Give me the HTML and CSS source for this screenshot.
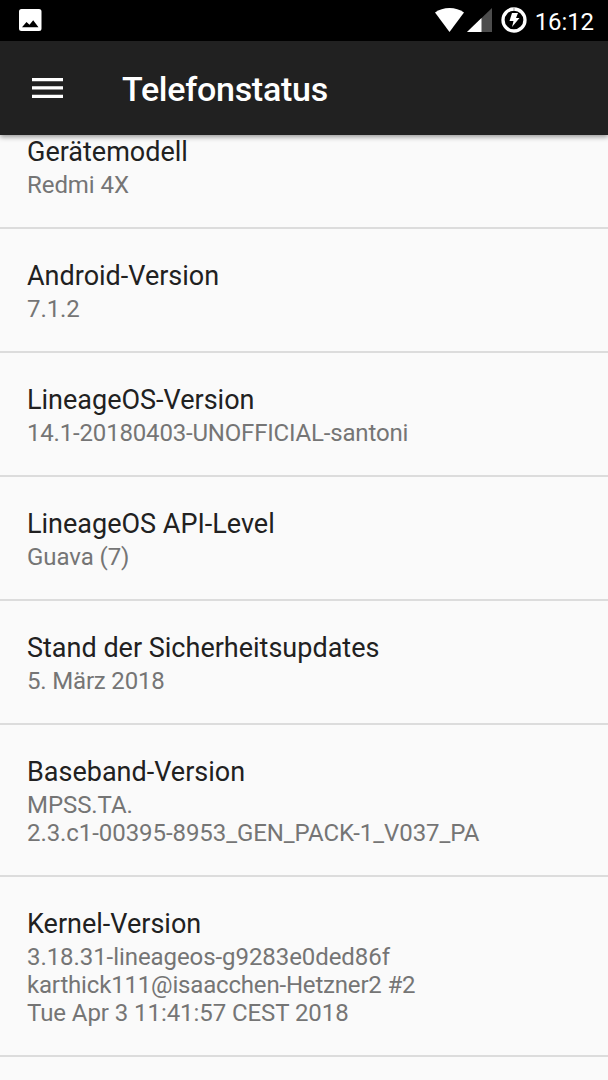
FILE: index.html
```html
<!DOCTYPE html>
<html lang="de">
	<head>
	<meta charset="utf-8" />
	<meta name="viewport" content="width=device-width, initial-scale=1"/>
	<title>Telefonstatus</title>
	<link rel="stylesheet" href="styles.css">
	</head>

	<body>
	<div class="statusbar">
		<svg class="picture" width="23" height="22" viewBox="0 0 23 22">
			<path fill="#fff" fill-rule="evenodd" d="M2.500 0h17.500a2.500 2.500 0 0 1 2.500 2.500v17a2.500 2.500 0 0 1-2.500 2.500H2.500A2.500 2.500 0 0 1 0 19.500v-17A2.500 2.500 0 0 1 2.500 0zM3 18.200h16.500l-5.300-7-3.700 4.500-3-2.700z"/>
		</svg>
		<div class="system">
			<svg class="wifi" width="29" height="24" viewBox="0 0 29 24">
				<path fill="#fff" d="M14.500 24L0 4.500C4 1.500 9 0 14.500 0s10.500 1.500 14.500 4.500z"/>
			</svg>
			<svg class="signal" width="25" height="24" viewBox="0 0 25 24">
				<path fill="#4d4d4d" d="M0 24L25 0v24z"/>
				<path fill="#fff" d="M0 24L14.500 10v14z"/>
			</svg>
			<svg class="battery" width="26" height="26" viewBox="0 0 26 26">
				<circle cx="13" cy="13" r="11" fill="none" stroke="#fff" stroke-width="3.300"/>
				<path stroke="#999" stroke-width="1" d="M13 0v3.500"/>
				<path fill="#fff" d="M11 6h6l-2 5h3.500l-7.500 9 1.500-6H8.500z"/>
			</svg>
			<span class="clock">16:12</span>
		</div>
	</div>
	<header class="toolbar">
		<svg class="menu" width="31" height="20" viewBox="0 0 31 20">
			<path fill="#fff" d="M0 0h31v3.300H0zM0 8.300h31v3.300H0zM0 16.700h31v3.300H0z"/>
		</svg>
		<h1>Telefonstatus</h1>
	</header>
	<ul class="list">
		<li><h2>Gerätemodell</h2><p>Redmi 4X</p></li>
		<li><h2>Android-Version</h2><p>7.1.2</p></li>
		<li><h2>LineageOS-Version</h2><p class="tight">14.1-20180403-UNOFFICIAL-santoni</p></li>
		<li><h2>LineageOS API-Level</h2><p>Guava (7)</p></li>
		<li><h2>Stand der Sicherheitsupdates</h2><p class="tight">5. März 2018</p></li>
		<li><h2>Baseband-Version</h2><p>MPSS.TA.<br>2.3.c1-00395-8953_GEN_PACK-1_V037_PA</p></li>
		<li><h2>Kernel-Version</h2><p>3.18.31-lineageos-g9283e0ded86f<br><span class="tight">karthick111@isaacchen-Hetzner2 #2</span><br>Tue Apr 3 11:41:57 CEST 2018</p></li>
	</ul>
	</body>
</html>
```
FILE: styles.css
```css
* {box-sizing:border-box;}
body {margin:0;height:1080px;overflow:hidden;background:#fafafa;font-family:Roboto, sans-serif;}
h1, h2, p, ul {margin:0;padding:0;}
svg {display:block;}

.statusbar {display:flex;justify-content:space-between;align-items:center;height:41px;padding:0 14px 0 19px;background:#000;}
.system {display:flex;align-items:center;color:#fff;}
.wifi, .signal, .picture, .battery {margin-bottom:1px;}
.signal {margin-left:3px;}
.battery {margin-left:9px;}
.clock {margin:2px 0 0 8px;font-size:24px;font-weight:450;line-height:28px;letter-spacing:-.1px;}

.toolbar {position:relative;display:flex;align-items:center;height:94px;padding-left:32px;background:#212121;
			box-shadow:0 2px 5px rgba(0,0,0,.4);}
.toolbar h1 {margin:2px 0 0 59px;font-size:34px;font-weight:500;line-height:40px;letter-spacing:-.26px;color:#fff;}

.list {list-style-type:none;}
.list li {padding:30px 27px 28px;border-bottom:2px solid #dcdcdc;}
.list li:first-child {padding-top:0;}
.list h2 {margin-top:-1px;padding-bottom:1px;font-size:27px;font-weight:400;line-height:36px;color:#212121;}
.list p {font-size:24px;line-height:28px;letter-spacing:-.07px;color:#757575;}
.list .tight {letter-spacing:-.18px;}
```
